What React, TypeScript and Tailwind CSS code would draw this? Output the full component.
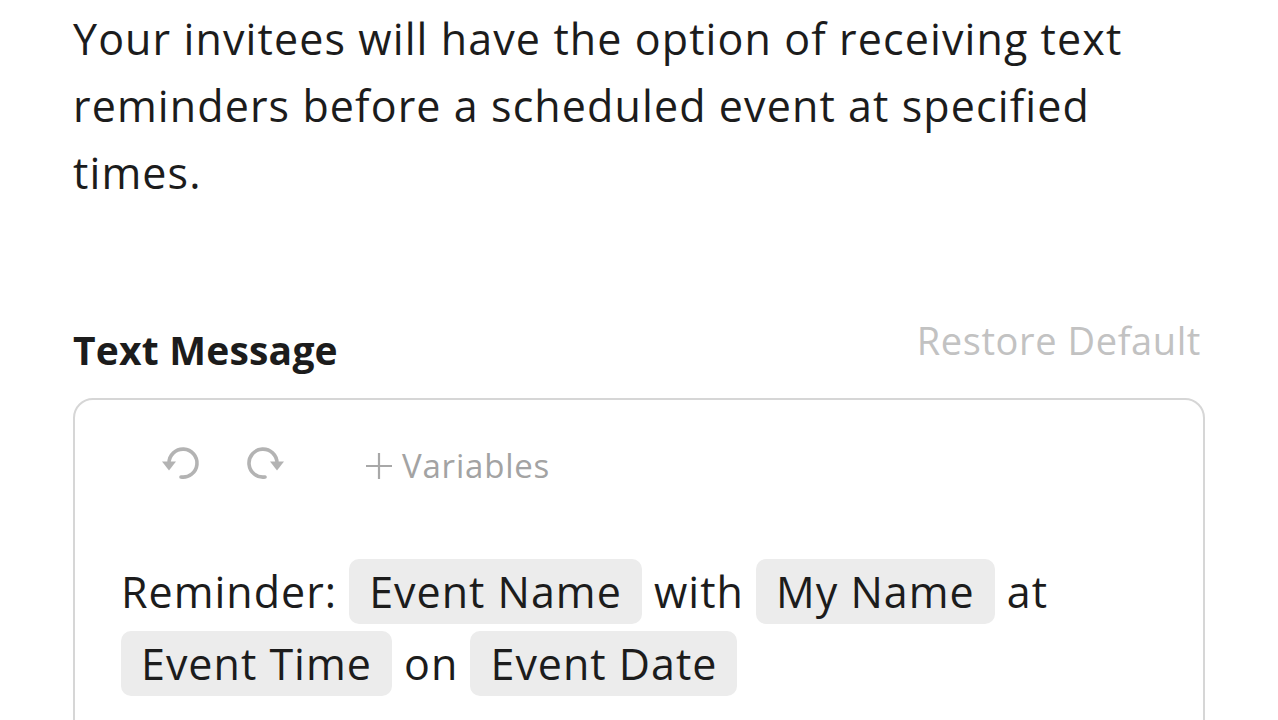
function Chip({ children }: { children: React.ReactNode }) {
  return (
    <span className="inline-block rounded-[10px] bg-[#ececec] px-[20px] leading-[65px]">{children}</span>
  )
}

function UndoIcon({ flip = false }: { flip?: boolean }) {
  return (
    <svg width="44" height="40" viewBox="0 0 44 40" className={flip ? "-scale-x-100" : ""} fill="none">
      <path d="M10 17A14 14 0 1 1 22 31" stroke="#b3b3b3" strokeWidth="3.6" strokeLinecap="round" />
      <path d="M3 15.5h14l-7 9z" fill="#b3b3b3" />
    </svg>
  )
}

export default function App() {
  return (
    <div className="h-[720px] w-[1278px] overflow-hidden bg-white font-['Open_Sans',sans-serif] text-[#1c1c1c]">
      <div className="pl-[73px] pr-[73px]">
        <p className="mt-[5px] w-[1100px] text-[43px] leading-[67px] tracking-[1.1px]">
          Your invitees will have the option of receiving text reminders before a scheduled event at specified times.
        </p>

        {/* Header row */}
        <div className="mt-[112px] flex items-end justify-between">
          <h3 className="text-[39px] font-bold leading-[44px] tracking-[0.2px]">Text Message</h3>
          <button className="pb-[10px] pr-[4px] text-[38px] leading-[44px] tracking-[0.6px] text-[#c2c2c2]">
            Restore Default
          </button>
        </div>

        {/* Editor */}
        <div className="mt-[26px] h-[360px] rounded-[20px] border-2 border-[#d6d6d6]">
          <div className="mt-[46px] flex h-[40px] items-center pl-[84px]">
            <UndoIcon />
            <div className="ml-[40px]">
              <UndoIcon flip />
            </div>
            <div className="ml-[77px] flex items-center text-[33px] leading-[40px] tracking-[0.8px] text-[#a3a3a3]">
              <svg width="30" height="30" viewBox="0 0 30 30">
                <path d="M15 2v26M2 15h26" stroke="#a8a8a8" strokeWidth="2.2" />
              </svg>
              <span className="ml-[8px]">Variables</span>
            </div>
          </div>
          <div className="mt-[70px] pl-[46px] pr-[40px] text-[43px] leading-[72px] tracking-[1px]">
            Reminder: <Chip>Event Name</Chip> with <Chip>My Name</Chip> at <Chip>Event Time</Chip> on{" "}
            <Chip>Event Date</Chip>
          </div>
        </div>
      </div>
    </div>
  )
}
